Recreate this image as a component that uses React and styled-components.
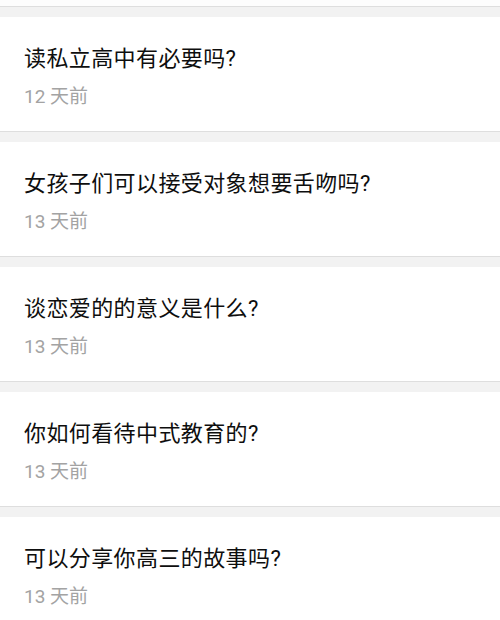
import React from "react";
import styled, { createGlobalStyle } from "styled-components";

const Global = createGlobalStyle`
  html, body { margin: 0; padding: 0; background: #f2f2f2; }
  body { font-family: Roboto, "Noto Sans CJK SC", sans-serif; }
`;

const List = styled.div`
  display: flex;
  flex-direction: column;
  width: 500px;
`;

const TopStrip = styled.div`
  height: 6px;
  background: #fdfdfd;
`;

const Separator = styled.div`
  height: 10px;
  border-top: 1px solid #dedede;
  background: #f2f2f2;
`;

const Card = styled.div`
  height: 114px;
  box-sizing: border-box;
  background: #ffffff;
  padding: 27px 24px 0;
  display: flex;
  flex-direction: column;
`;

const Title = styled.div`
  font-size: 22px;
  line-height: 30px;
  font-weight: 400;
  color: #0e0e0e;
  white-space: nowrap;
  letter-spacing: 0.4px;
`;

const Meta = styled.div`
  margin-top: 11px;
  font-size: 19px;
  line-height: 24px;
  color: #a3a3a3;
`;

const items = [
  { title: "读私立高中有必要吗?", days: 12 },
  { title: "女孩子们可以接受对象想要舌吻吗?", days: 13 },
  { title: "谈恋爱的的意义是什么?", days: 13 },
  { title: "你如何看待中式教育的?", days: 13 },
  { title: "可以分享你高三的故事吗?", days: 13 },
];

export default function App() {
  return (
    <>
      <Global />
      <List>
        <TopStrip />
        {items.map((it, i) => (
          <React.Fragment key={i}>
            <Separator />
            <Card>
              <Title>{it.title}</Title>
              <Meta>{it.days} 天前</Meta>
            </Card>
          </React.Fragment>
        ))}
      </List>
    </>
  );
}
